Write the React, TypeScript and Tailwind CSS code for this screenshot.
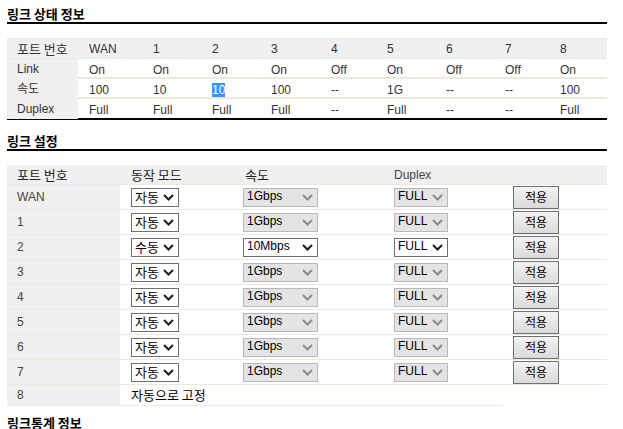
import React from 'react';

const ports = ['WAN', '1', '2', '3', '4', '5', '6', '7', '8'];
const statusRows = [
  { label: 'Link', values: ['On', 'On', 'On', 'On', 'Off', 'On', 'Off', 'Off', 'On'] },
  { label: '속도', values: ['100', '10', '10', '100', '--', '1G', '--', '--', '100'] },
  { label: 'Duplex', values: ['Full', 'Full', 'Full', 'Full', '--', 'Full', '--', '--', 'Full'] },
];

const settingRows = [
  { port: 'WAN', mode: '자동', speed: '1Gbps', duplex: 'FULL', manual: false },
  { port: '1', mode: '자동', speed: '1Gbps', duplex: 'FULL', manual: false },
  { port: '2', mode: '수동', speed: '10Mbps', duplex: 'FULL', manual: true },
  { port: '3', mode: '자동', speed: '1Gbps', duplex: 'FULL', manual: false },
  { port: '4', mode: '자동', speed: '1Gbps', duplex: 'FULL', manual: false },
  { port: '5', mode: '자동', speed: '1Gbps', duplex: 'FULL', manual: false },
  { port: '6', mode: '자동', speed: '1Gbps', duplex: 'FULL', manual: false },
  { port: '7', mode: '자동', speed: '1Gbps', duplex: 'FULL', manual: false },
];

const arial = "font-['Liberation_Sans','Noto_Sans_CJK_KR',sans-serif]";
const grid1 = 'grid grid-cols-[71px_64px_59px_59px_60px_56px_59px_59px_55px_58px]';
const grid2 = 'grid grid-cols-[113px_113px_151px_119px_104px]';

function Title({ children, className = '' }: { children: React.ReactNode; className?: string }) {
  return (
    <h2 className={`text-[13px] leading-[16px] font-bold text-black font-['Noto_Sans_CJK_KR',sans-serif] ${className}`}>
      {children}
    </h2>
  );
}

function Chevron({ disabled }: { disabled?: boolean }) {
  return (
    <svg width="11" height="7" viewBox="0 0 11 7" className="shrink-0">
      <path d="M1 1 L5.5 5.5 L10 1" fill="none" stroke={disabled ? '#8a8a8a' : '#1b1b2a'} strokeWidth="2" />
    </svg>
  );
}

function FakeSelect({ value, width, disabled, korean }: { value: string; width: string; disabled?: boolean; korean?: boolean }) {
  return (
    <div
      className={`${width} h-[19px] flex items-center justify-between pl-[3px] pr-[4px] border leading-none text-black ${
        korean ? "text-[13px] font-['Noto_Sans_CJK_KR',sans-serif]" : 'text-[12px]'
      } ${disabled ? 'bg-[#e4e4e4] border-[#b9b9b9]' : 'bg-white border-[#6f6f6f]'}`}
    >
      <span className="-mt-[2px]">{value}</span>
      <Chevron disabled={disabled} />
    </div>
  );
}

function ApplyButton() {
  return (
    <button className="w-[46px] h-[23px] border border-[#707070] bg-gradient-to-b from-[#f3f3f3] to-[#dadada] text-[12px] leading-none text-black font-['Noto_Sans_CJK_KR',sans-serif]">
      적용
    </button>
  );
}

export default function App() {
  return (
    <div className={`w-[623px] h-[429px] overflow-hidden bg-white pl-[7px] ${arial}`}>
      <div className="w-[600px]">
        {/* 링크 상태 정보 */}
        <Title className="mt-[6px] border-b-2 border-black">링크 상태 정보</Title>

        <div className="mt-[14px] text-[12px] text-[#333]">
          <div className={`${grid1} h-[20px] items-center bg-[#f0f0f0] border-t border-[#efe9da]`}>
            <div className="pl-[10px] text-[13px] font-['Noto_Sans_CJK_KR',sans-serif]">포트 번호</div>
            {ports.map((p) => (
              <div key={p} className="pl-[11px]">{p}</div>
            ))}
          </div>
          {statusRows.map((row, ri) => (
            <div
              key={row.label}
              className={`${grid1} h-[20px] ${ri < statusRows.length - 1 ? 'border-b border-[#efe9da]' : ''} border-t border-[#efe9da]`}
            >
              <div className="bg-[#f0f0f0] pl-[10px] flex items-center">{row.label}</div>
              {row.values.map((v, i) => (
                <div key={i} className="pl-[11px] flex items-center pt-[2px]">
                  {ri === 1 && i === 2 ? <span className="bg-[#3297fd] text-white leading-[14px]">{v}</span> : v}
                </div>
              ))}
            </div>
          ))}
          <div className="h-[2px] bg-black" />
        </div>

        {/* 링크 설정 */}
        <Title className="mt-[13px] border-b-2 border-black">링크 설정</Title>

        <div className="mt-[14px] text-[12px] text-[#444]">
          <div className={`${grid2} h-[20px] items-center bg-[#f0f0f0] border-b border-[#efe9da] text-[13px] text-[#222] font-['Noto_Sans_CJK_KR',sans-serif]`}>
            <div className="pl-[10px]">포트 번호</div>
            <div className="pl-[11px]">동작 모드</div>
            <div className="pl-[12px]">속도</div>
            <div className={`pl-[10px] text-[12px] text-[#444] ${arial}`}>Duplex</div>
            <div />
          </div>
          {settingRows.map((r) => (
            <div key={r.port} className={`${grid2} h-[25px] border-b border-[#efe9da]`}>
              <div className="bg-[#f0f0f0] pl-[10px] flex items-center">{r.port}</div>
              <div className="pl-[11px] flex items-center">
                <FakeSelect value={r.mode} width="w-[48px]" korean />
              </div>
              <div className="pl-[10px] flex items-center">
                <FakeSelect value={r.speed} width="w-[75px]" disabled={!r.manual} />
              </div>
              <div className="pl-[10px] flex items-center">
                <FakeSelect value={r.duplex} width="w-[54px]" disabled={!r.manual} />
              </div>
              <div className="pl-[10px] flex items-center">
                <ApplyButton />
              </div>
            </div>
          ))}
          <div className={`${grid2} h-[20px]`}>
            <div className="bg-[#f0f0f0] pl-[10px] flex items-center border-b border-[#efe9da]">8</div>
            <div className="col-span-3 pl-[11px] flex items-center border-b border-[#efe9da] text-[13px] text-black font-['Noto_Sans_CJK_KR',sans-serif]">
              자동으로 고정
            </div>
            <div />
          </div>
        </div>

        {/* 링크통계 정보 */}
        <Title className="mt-[10px]">링크통계 정보</Title>
      </div>
    </div>
  );
}
